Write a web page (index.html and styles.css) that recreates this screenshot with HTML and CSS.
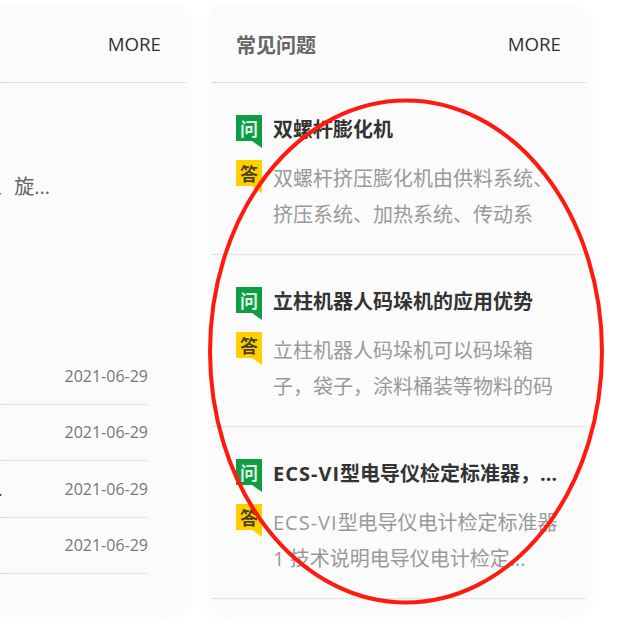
FILE: index.html
```html
<!DOCTYPE html>
<html lang="zh-CN">
<head>
    <meta charset="UTF-8">
    <meta name="viewport" content="width=device-width, initial-scale=1.0">
    <title>常见问题</title>
    <link rel="stylesheet" href="styles.css">
</head>
<body>

    <div class="page">
        <!-- News card, cut off by the window -->
        <section class="card news">
            <div class="card-head">
                <h2></h2>
                <a class="more">MORE</a>
            </div>
            <div class="lead"><p>、旋...</p></div>
            <ul class="news-list">
                <li><span class="date">2021-06-29</span></li>
                <li><span class="date">2021-06-29</span></li>
                <li><span class="news-title">...</span><span class="date">2021-06-29</span></li>
                <li><span class="date">2021-06-29</span></li>
            </ul>
        </section>

        <!-- FAQ card -->
        <section class="card faq">
            <div class="card-head">
                <h2>常见问题</h2>
                <a class="more">MORE</a>
            </div>
            <div class="faq-item">
                <span class="badge ask">问</span>
                <h3>双螺杆膨化机</h3>
                <span class="badge answer">答</span>
                <p>双螺杆挤压膨化机由供料系统、挤压系统、加热系统、传动系</p>
            </div>
            <div class="faq-item">
                <span class="badge ask">问</span>
                <h3>立柱机器人码垛机的应用优势</h3>
                <span class="badge answer">答</span>
                <p>立柱机器人码垛机可以码垛箱子，袋子，涂料桶装等物料的码</p>
            </div>
            <div class="faq-item">
                <span class="badge ask">问</span>
                <h3><span class="latin">ECS-VI</span>型电导仪检定标准器，电导仪电计</h3>
                <span class="badge answer">答</span>
                <p><span class="latin">ECS-VI</span>型电导仪电计检定标准器 1 技术说明电导仪电计检定...</p>
            </div>
        </section>
    </div>

    <!-- Red hand-drawn ring over the FAQ card -->
    <svg class="ring" width="618" height="629" viewBox="0 0 618 629">
        <ellipse cx="406" cy="351.5" rx="196" ry="251" />
    </svg>

</body>
</html>
```

FILE: styles.css
```css
* {
    box-sizing: border-box;
}

body {
    margin: 0;
    width: 618px;
    height: 629px;
    overflow: hidden;
    position: relative;
    background-color: #ffffff;
    font-family: "Open Sans", "Noto Sans CJK SC", sans-serif;
}

.page {
    display: flex;
    gap: 26px;
    padding-top: 6px;
}

.card {
    height: 605px;
    background-color: #fbfbfb;
    box-shadow: 0 4px 16px rgba(0, 0, 0, 0.04);
    overflow: hidden;
}

.news {
    width: 186px;
    flex-shrink: 0;
    border-radius: 0 10px 10px 0;
}

.faq {
    width: 374px;
    flex-shrink: 0;
    border-radius: 10px;
}

.card-head {
    height: 77px;
    padding: 0 25px 0 24px;
    display: flex;
    justify-content: space-between;
    align-items: center;
    border-bottom: 1px dotted #c4c4c4;
}

.card-head h2 {
    margin: 0;
    font-size: 20px;
    font-weight: 700;
    color: #666666;
}

.more {
    padding-bottom: 2px;
    font-size: 18.7px;
    color: #333333;
}

/* News card */
.lead {
    height: 265px;
    padding: 86px 136px 0 0;
    display: flex;
    justify-content: flex-end;
    white-space: nowrap;
}

.lead p {
    margin: 0;
    font-size: 20px;
    line-height: 36px;
    color: #666666;
}

.news-list {
    list-style: none;
    margin: 0;
    padding: 0 38px 0 0;
}

.news-list li {
    height: 56.5px;
    display: flex;
    justify-content: flex-end;
    align-items: center;
    white-space: nowrap;
    border-bottom: 1px dotted #cccccc;
}

.news-title {
    margin-right: 62px;
    font-size: 18px;
    color: #333333;
}

.date {
    flex-shrink: 0;
    font-size: 16px;
    color: #777777;
}

/* FAQ card */
.faq-item {
    height: 172px;
    padding: 32px 24px 0;
    display: grid;
    grid-template-columns: 26px 1fr;
    grid-template-rows: 30px 72px;
    column-gap: 11px;
    row-gap: 16px;
    border-bottom: 1px dotted #cccccc;
}

.faq-item h3 {
    margin: 0;
    font-size: 20px;
    font-weight: 700;
    line-height: 30px;
    color: #333333;
    white-space: nowrap;
    overflow: hidden;
    text-overflow: ellipsis;
}

.faq-item p {
    margin: 0;
    font-size: 20px;
    line-height: 36px;
    color: #999999;
}

.latin {
    letter-spacing: 1px;
}

.badge {
    width: 26px;
    height: 26px;
    position: relative;
    display: flex;
    justify-content: center;
    align-items: center;
    font-size: 18px;
    font-weight: 700;
}

.badge::after {
    content: "";
    position: absolute;
    top: 26px;
    right: 0;
    width: 10px;
    height: 7px;
    background-color: inherit;
    clip-path: polygon(0 0, 100% 0, 100% 100%);
}

.ask {
    background-color: #0d9e44;
    color: #dcefe1;
}

.answer {
    margin-top: -1px;
    background-color: #ffd000;
    color: #4a4020;
}

.ring {
    position: absolute;
    top: 0;
    left: 0;
}

.ring ellipse {
    fill: none;
    stroke: #ff1a10;
    stroke-width: 4;
}
```
